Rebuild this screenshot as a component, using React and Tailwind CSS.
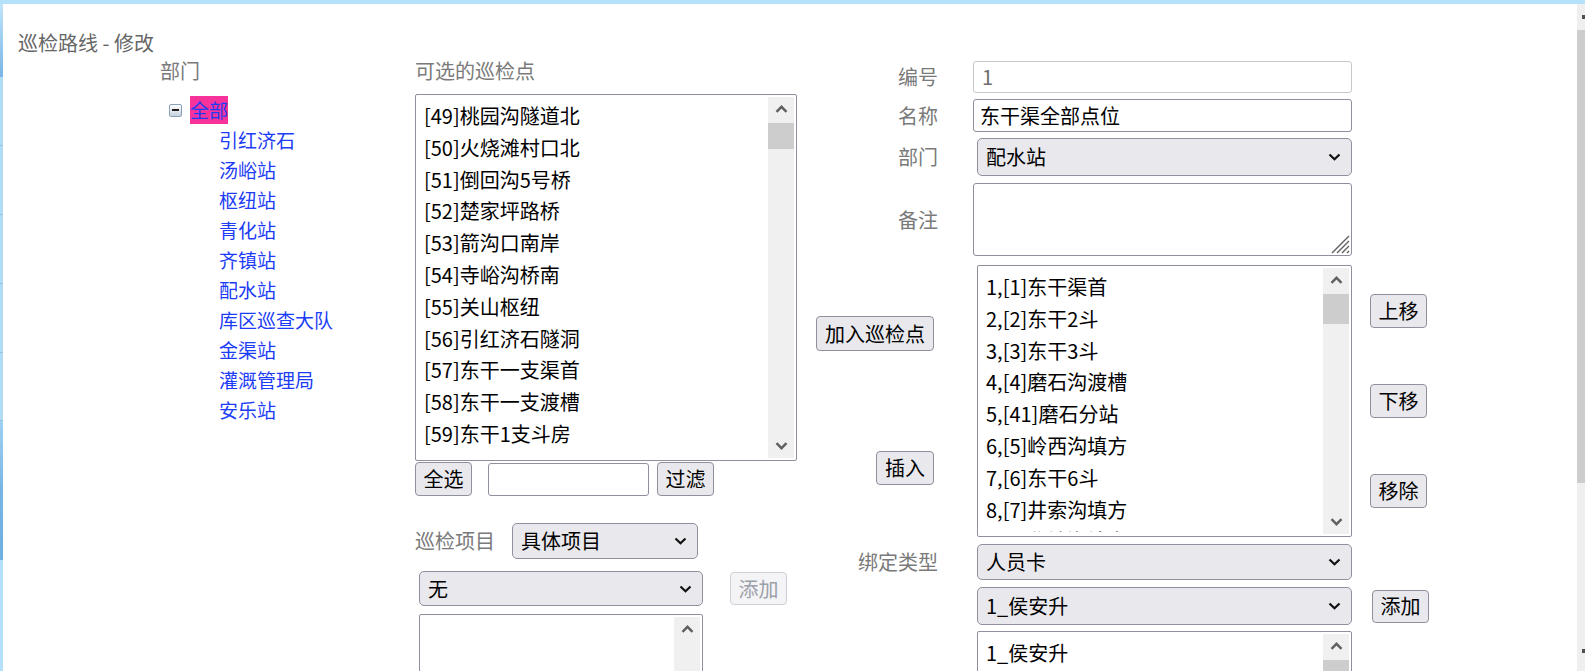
import React from "react";

const FONT = "font-['Noto_Sans_CJK_SC','Microsoft_YaHei',sans-serif]";

function Chev({ up = false, color = "#606060", w = 13, h = 8, sw = 2.4 }) {
  return (
    <svg width={w} height={h} viewBox="0 0 13 8">
      <path
        d={up ? "M1.5 6.8 L6.5 1.8 L11.5 6.8" : "M1.5 1.2 L6.5 6.2 L11.5 1.2"}
        fill="none"
        stroke={color}
        strokeWidth={sw}
      />
    </svg>
  );
}

function SelChev() {
  return (
    <svg width="13" height="8" viewBox="0 0 13 8">
      <path d="M1.5 1.5 L6.5 6.3 L11.5 1.5" fill="none" stroke="#111" strokeWidth="2.2" />
    </svg>
  );
}

function VScroll({ thumbClass = "", down = true }) {
  return (
    <div className="w-[26px] my-[2px] mr-[2px] bg-[#f0f0f0] flex flex-col shrink-0">
      <div className="h-[24px] flex items-center justify-center shrink-0">
        <Chev up />
      </div>
      {thumbClass ? <div className={`mt-[2px] bg-[#cdcdcd] shrink-0 ${thumbClass}`} /> : null}
      <div className="flex-1" />
      {down ? (
        <div className="h-[24px] flex items-center justify-center shrink-0">
          <Chev />
        </div>
      ) : null}
    </div>
  );
}

function ListBox({ items, className = "", thumbClass, down = true }) {
  return (
    <div className={`flex border border-[#8f8f9d] rounded-[2px] bg-white overflow-hidden ${className}`}>
      <div className="flex-1 overflow-hidden mb-[4px] pt-[5px] pl-[8px] text-[20px] text-black">
        {items.map((t) => (
          <div key={t} className="h-[31.8px] leading-[31.8px] whitespace-nowrap">
            {t}
          </div>
        ))}
      </div>
      <VScroll thumbClass={thumbClass} down={down} />
    </div>
  );
}

function Select({ value, className = "" }) {
  return (
    <div
      className={`flex items-center justify-between rounded-[5px] border border-[#8f8f9d] bg-[#e9e9ed] pl-[8px] pr-[10px] text-[20px] text-black ${className}`}
    >
      <span className="leading-none">{value}</span>
      <SelChev />
    </div>
  );
}

function Btn({ children, className = "", disabled = false }) {
  return (
    <div
      className={`flex items-center justify-center rounded-[4px] border text-[20px] leading-none ${
        disabled
          ? "border-[#cfcfd6] bg-[#f4f4f6] text-[#9aa0a8]"
          : "border-[#8f8f9d] bg-[#e9e9ed] text-black"
      } ${className}`}
    >
      {children}
    </div>
  );
}

function LeftStrip() {
  return (
    <div className="w-[3px] flex flex-col shrink-0">
      <div className="h-[73px] bg-linear-to-b from-[#bfe4fa] to-[#79b5e5]" />
      <div className="h-[69px] bg-[#b2dcf6] border-b border-[#97c3e0]" />
      <div className="h-[69px] bg-[#b2dcf6] border-b border-[#97c3e0]" />
      <div className="h-[69px] bg-[#b2dcf6] border-b border-[#97c3e0]" />
      <div className="h-[69px] bg-[#b2dcf6] border-b border-[#97c3e0]" />
      <div className="h-[68px] bg-[#b2dcf6] border-b border-[#97c3e0]" />
      <div className="h-[139px] bg-linear-to-b from-[#9fd1f1] via-[#78b5e4] to-[#6cafe1]" />
      <div className="flex-1 bg-[#b3e0fd]" />
    </div>
  );
}

function Label({ children, className = "" }) {
  return <div className={`text-[20px] text-[#7a7a7a] ${className}`}>{children}</div>;
}

const tree = ["引红济石", "汤峪站", "枢纽站", "青化站", "齐镇站", "配水站", "库区巡查大队", "金渠站", "灌溉管理局", "安乐站"];

const list1 = [
  "[49]桃园沟隧道北",
  "[50]火烧滩村口北",
  "[51]倒回沟5号桥",
  "[52]楚家坪路桥",
  "[53]箭沟口南岸",
  "[54]寺峪沟桥南",
  "[55]关山枢纽",
  "[56]引红济石隧洞",
  "[57]东干一支渠首",
  "[58]东干一支渡槽",
  "[59]东干1支斗房",
  "[60]东干二支渠首",
];

const list2 = [
  "1,[1]东干渠首",
  "2,[2]东干2斗",
  "3,[3]东干3斗",
  "4,[4]磨石沟渡槽",
  "5,[41]磨石分站",
  "6,[5]岭西沟填方",
  "7,[6]东干6斗",
  "8,[7]井索沟填方",
  "9,[8]北坡沟填方",
];

export default function App() {
  return (
    <div className={`w-[1585px] h-[671px] overflow-hidden flex flex-col bg-[#b5e1fb] ${FONT}`}>
      <div className="h-[4px] shrink-0" />
      <div className="flex flex-1 min-h-0">
        <LeftStrip />
        <main className="flex-1 bg-white overflow-hidden">
          <div className="pl-[15px] pt-[26px] h-[52px] leading-[26px] text-[20px] text-[#666]">巡检路线 - 修改</div>

          <div className="flex items-start pl-[157px]">
            {/* tree column */}
            <div className="w-[255px] shrink-0">
              <Label className="h-[30px] leading-[30px]">部门</Label>
              <div className="mt-[9px] ml-[9px] h-[30px] flex items-center">
                <div className="w-[13px] h-[13px] rounded-[2px] border border-[#8aa0b8] bg-linear-to-b from-[#ffffff] to-[#c6d2df] flex items-center justify-center">
                  <div className="w-[7px] h-[2px] bg-[#1e1e1e]" />
                </div>
                <span className="ml-[8px] h-[28px] leading-[28px] bg-[#f7339b] text-[19px] text-[#1c3cf5]">全部</span>
              </div>
              <div className="pl-[59px]">
                {tree.map((t) => (
                  <div key={t} className="h-[30px] leading-[30px] text-[19px] text-[#1c3cf5] whitespace-nowrap">
                    {t}
                  </div>
                ))}
              </div>
            </div>

            {/* middle column */}
            <div className="w-[401px] shrink-0">
              <Label className="h-[30px] leading-[30px]">可选的巡检点</Label>
              <ListBox items={list1} className="mt-[8px] w-[382px] h-[367px]" thumbClass="h-[26px]" />
              <div className="mt-[1px] flex items-center h-[34px]">
                <Btn className="w-[57px] h-[34px]">全选</Btn>
                <div className="ml-[16px] w-[161px] h-[33px] rounded-[3px] border border-[#8f8f9d] bg-white" />
                <Btn className="ml-[8px] w-[57px] h-[34px]">过滤</Btn>
              </div>
              <div className="mt-[27px] flex items-center h-[36px]">
                <Label className="w-[97px] leading-none">巡检项目</Label>
                <Select value="具体项目" className="w-[186px] h-[36px]" />
              </div>
              <div className="mt-[12px] pl-[4px] flex items-center h-[35px]">
                <Select value="无" className="w-[284px] h-[35px]" />
                <Btn disabled className="ml-[27px] w-[57px] h-[33px]">添加</Btn>
              </div>
              <ListBox items={[]} className="mt-[8px] ml-[4px] w-[284px] h-[120px]" down={false} />
            </div>

            {/* right form */}
            <div className="mt-[5px] shrink-0">
              <div className="flex items-center h-[32px]">
                <Label className="w-[122px] text-right leading-none">编号</Label>
                <div className="ml-[35px] w-[379px] h-[32px] rounded-[3px] border border-[#c8c8cc] bg-white flex items-center pl-[8px] text-[20px] text-[#6d6d6d]">1</div>
              </div>
              <div className="mt-[6px] flex items-center h-[33px]">
                <Label className="w-[122px] text-right leading-none">名称</Label>
                <div className="ml-[35px] w-[379px] h-[33px] rounded-[3px] border border-[#8f8f9d] bg-white flex items-center pl-[6px] text-[20px] text-black">东干渠全部点位</div>
              </div>
              <div className="mt-[6px] flex items-center h-[38px]">
                <Label className="w-[122px] text-right leading-none">部门</Label>
                <Select value="配水站" className="ml-[39px] w-[375px] h-[38px]" />
              </div>
              <div className="mt-[7px] flex items-center h-[73px]">
                <Label className="w-[122px] text-right leading-none">备注</Label>
                <div className="relative ml-[35px] w-[379px] h-[73px] rounded-[3px] border border-[#8f8f9d] bg-white">
                  <svg width="22" height="22" viewBox="0 0 22 22" className="absolute right-[1px] bottom-[1px]">
                    <path
                      d="M21 4 L4 21 M21 9 L9 21 M21 14 L14 21 M21 19 L19 21"
                      stroke="#5f5f5f"
                      strokeWidth="1.4"
                    />
                  </svg>
                </div>
              </div>
              <div className="mt-[9px] flex items-start h-[272px]">
                <div className="w-[122px] flex flex-col items-end pr-[4px]">
                  <Btn className="mt-[51px] w-[118px] h-[35px]">加入巡检点</Btn>
                  <Btn className="mt-[100px] w-[58px] h-[34px]">插入</Btn>
                </div>
                <ListBox items={list2} className="ml-[39px] w-[375px] h-[272px]" thumbClass="h-[30px]" />
                <div className="ml-[18px] flex flex-col">
                  <Btn className="mt-[29px] w-[57px] h-[34px]">上移</Btn>
                  <Btn className="mt-[56px] w-[57px] h-[34px]">下移</Btn>
                  <Btn className="mt-[56px] w-[57px] h-[34px]">移除</Btn>
                </div>
              </div>
              <div className="mt-[7px] flex items-center h-[36px]">
                <Label className="w-[122px] text-right leading-none">绑定类型</Label>
                <Select value="人员卡" className="ml-[39px] w-[375px] h-[36px]" />
              </div>
              <div className="mt-[7px] flex items-center h-[38px]">
                <div className="w-[122px]" />
                <Select value="1_侯安升" className="ml-[39px] w-[375px] h-[38px]" />
                <Btn className="ml-[20px] w-[57px] h-[33px]">添加</Btn>
              </div>
              <ListBox items={["1_侯安升"]} className="mt-[6px] ml-[161px] w-[375px] h-[120px]" thumbClass="h-[60px]" down={false} />
            </div>
          </div>
        </main>
        {/* window scrollbar (partially visible) */}
        <div className="w-[8px] shrink-0 bg-[#efefef] flex flex-col">
          <div className="h-[26px] flex items-center justify-end">
            <div className="w-[3px] h-[4px] bg-[#505050]" />
          </div>
          <div className="h-[453px] bg-[#cdcdcd]" />
          <div className="flex-1" />
          <div className="h-[22px] flex items-start justify-end">
            <div className="w-[3px] h-[4px] bg-[#505050]" />
          </div>
        </div>
      </div>
    </div>
  );
}
